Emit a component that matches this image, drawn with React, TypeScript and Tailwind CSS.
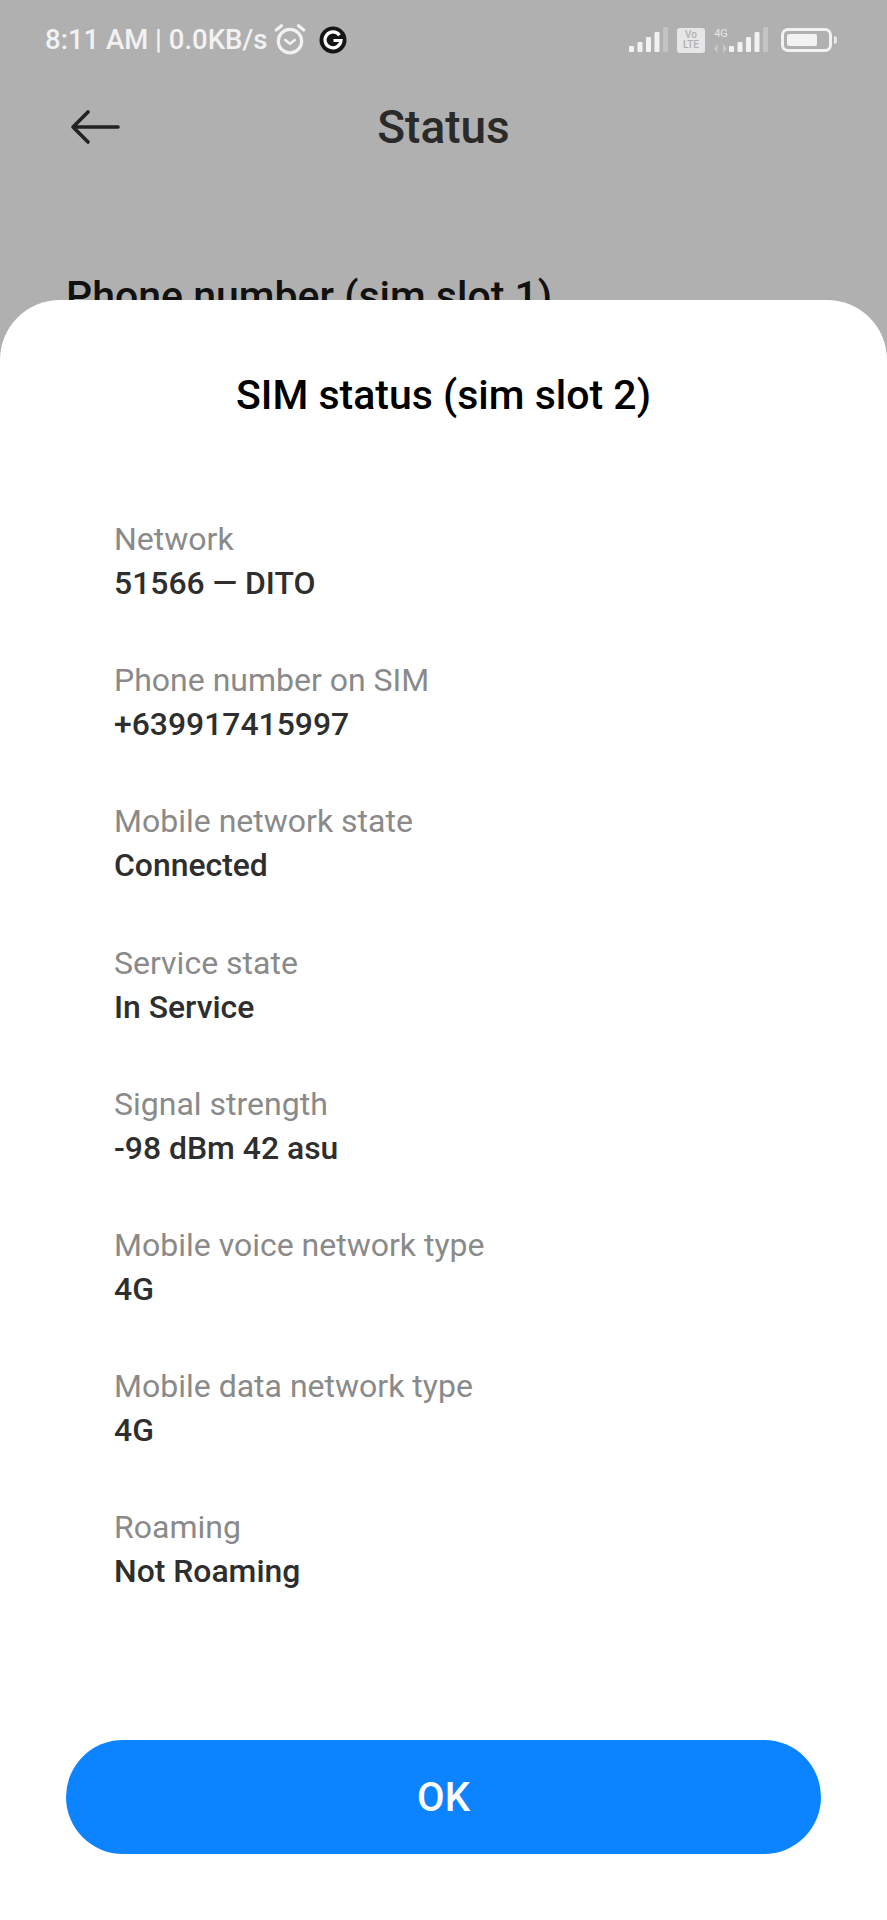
import React from "react";

const rows = [
  ["Network", "51566 — DITO"],
  ["Phone number on SIM", "+639917415997"],
  ["Mobile network state", "Connected"],
  ["Service state", "In Service"],
  ["Signal strength", "-98 dBm 42 asu"],
  ["Mobile voice network type", "4G"],
  ["Mobile data network type", "4G"],
  ["Roaming", "Not Roaming"],
];

const Signal = () => (
  <svg width="40" height="26" viewBox="0 0 40 26">
    <rect x="0" y="19" width="5" height="6" rx="1" fill="#f2f2f2" />
    <rect x="8.5" y="15" width="5" height="10" rx="1" fill="#f2f2f2" />
    <rect x="17" y="10" width="5" height="15" rx="1" fill="#f2f2f2" />
    <rect x="25.5" y="5" width="5" height="20" rx="1" fill="#f2f2f2" />
    <rect x="34" y="0" width="5" height="25" rx="1" fill="#c4c4c4" />
  </svg>
);

const StatusBar = () => (
  <div className="flex h-[76px] items-center pl-[45px] pr-[50px] pt-1 text-[#f2f2f2]">
    <span className="text-[27.5px] font-medium leading-none">8:11 AM | 0.0KB/s</span>
    <svg className="ml-[6px] mb-[3px]" width="34" height="34" viewBox="0 0 32 32" fill="none" stroke="#f2f2f2" strokeWidth="3" strokeLinecap="round" strokeLinejoin="round">
      <circle cx="16" cy="18" r="11" />
      <path d="M11.5 17l4.5 3.5 4.5-3.5" strokeWidth="2.5" />
      <path d="M3 7.5 8 3.5M29 7.5 24 3.5" />
    </svg>
    <svg className="ml-[12px]" width="28" height="28" viewBox="0 0 28 28">
      <circle cx="14" cy="14" r="13.5" fill="#151515" />
      <path d="M20.5 9.2A8 8 0 1 0 22 14.5h-7.5" fill="none" stroke="#fff" strokeWidth="3.2" />
    </svg>
    <div className="ml-auto flex items-center">
      <Signal />
      <div className="ml-2 flex h-[25px] w-[28px] flex-col items-center justify-center rounded-[3px] bg-[#e6e6e6] text-[10px] font-medium leading-[10px] text-[#b0b0b0]">
        <span>Vo</span>
        <span>LTE</span>
      </div>
      <div className="ml-2 flex w-[16px] flex-col items-center">
        <span className="text-[11px] leading-[12px] text-[#e6e6e6]">4G</span>
        <svg className="mt-1" width="14" height="9" viewBox="0 0 14 9">
          <path d="M3.5 0v9L0 4.5zM9 0l4 4.5L9 9z" fill="#c8c8c8" />
        </svg>
      </div>
      <Signal />
      <div className="ml-3 flex h-[24px] w-[51px] items-center rounded-[7px] border-[3px] border-[#f2f2f2] p-[3px]">
        <div className="h-full w-[30px] rounded-[2px] bg-[#f2f2f2]" />
      </div>
      <div className="ml-[2px] h-[8px] w-[3px] rounded-r-sm bg-[#e6e6e6]" />
    </div>
  </div>
);

const App = () => {
  return (
    <div className="flex h-[1920px] w-[887px] flex-col overflow-hidden bg-[#b0b0b0] font-['Roboto',sans-serif]">
      <div className="h-[300px] shrink-0 overflow-hidden">
        <StatusBar />
        <div className="relative flex h-[102px] items-center justify-center">
          <svg className="absolute left-[70px] top-[33px]" width="50" height="36" viewBox="0 0 50 36" fill="none" stroke="#222" strokeWidth="3.6" strokeLinecap="round" strokeLinejoin="round">
            <path d="M48 18H4M18 3 3 18l15 15" />
          </svg>
          <span className="text-[46px] font-medium leading-none text-[#2a2a2a]">Status</span>
        </div>
        <div className="whitespace-nowrap pl-[66px] pt-[95px] text-[41px] font-medium leading-[46px] text-[#111]">
          Phone number (sim slot 1)
        </div>
      </div>
      <div className="flex flex-1 flex-col rounded-t-[60px] bg-white">
        <h1 className="pt-[70px] text-center text-[41px] font-medium leading-[50px] text-black">
          SIM status (sim slot 2)
        </h1>
        <div className="flex flex-col gap-[57.2px] pl-[114px] pt-[99px]">
          {rows.map(([label, value]) => (
            <div key={label} className="flex flex-col gap-[4px]">
              <span className="text-[32px] leading-[40px] text-[#8a8a8a]">{label}</span>
              <span className="text-[31.9px] font-medium leading-[40px] text-[#2e2e2e]">{value}</span>
            </div>
          ))}
        </div>
        <div className="mt-auto px-[66px] pb-[66px]">
          <button className="flex h-[114px] w-full items-center justify-center rounded-full bg-[#0d84ff] pt-[2px] text-[40px] font-medium text-white">
            OK
          </button>
        </div>
      </div>
    </div>
  );
};

export default App;
